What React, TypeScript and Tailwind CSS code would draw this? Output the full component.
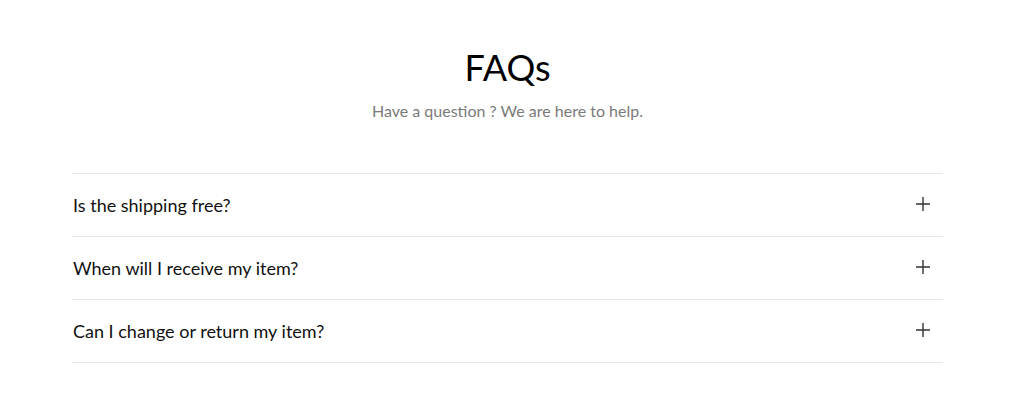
import { useState } from 'react';

const faqs = [
  { q: 'Is the shipping free?', a: 'Yes, shipping is free on all orders.' },
  { q: 'When will I receive my item?', a: 'Orders usually arrive within 3-5 business days.' },
  { q: 'Can I change or return my item?', a: 'Yes, within 30 days of delivery.' },
];

export default function App() {
  const [open, setOpen] = useState<number | null>(null);

  return (
    <div className="min-h-screen bg-white" style={{ fontFamily: 'Lato, "Noto Sans", sans-serif' }}>
      <div className="pl-[72px] w-[943px]">
        <div className="pt-[43px] text-center">
          <h1 className="text-[36px] leading-[48px] text-black">FAQs</h1>
          <p className="mt-[10px] text-[16px] leading-[20px] text-[#7a7a7a]">Have a question ? We are here to help.</p>
        </div>

        <div className="mt-[52px] border-b border-[#e8e8e8]">
          {faqs.map((f, i) => (
            <div key={i} className="border-t border-[#e8e8e8]">
              <button
                onClick={() => setOpen(open === i ? null : i)}
                className="flex h-[62px] w-full items-center justify-between pl-[1px] pr-[13px] text-left"
              >
                <span className="text-[18px] text-[#111]">{f.q}</span>
                <svg width="14" height="14" viewBox="0 0 14 14" className="mb-[2px] text-[#333]">
                  <path d="M7 0v14M0 7h14" stroke="currentColor" strokeWidth="1.4" />
                </svg>
              </button>
              {open === i && <p className="pb-4 text-[15px] text-[#666]">{f.a}</p>}
            </div>
          ))}
        </div>
      </div>
    </div>
  );
}
